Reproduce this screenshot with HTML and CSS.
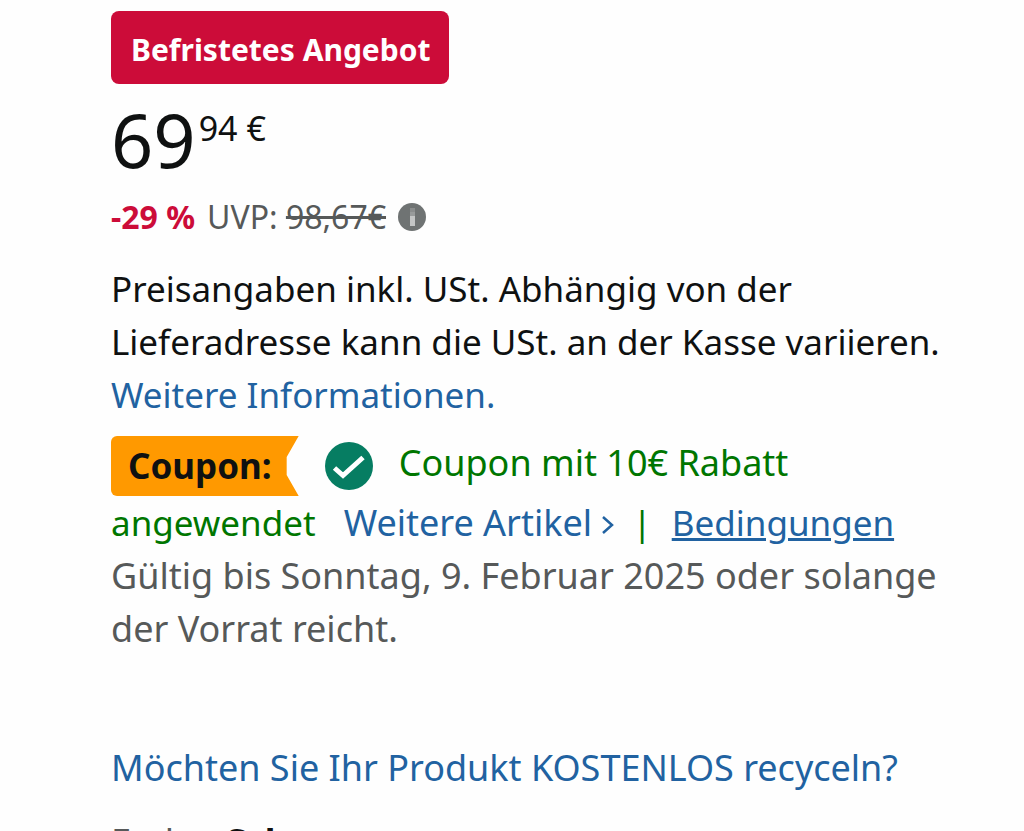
FILE: index.html
```
<!DOCTYPE html>
<html lang="de">
<head>
    <meta charset="UTF-8">
    <meta name="viewport" content="width=device-width, initial-scale=1.0">
    <title>Produktpreis</title>
    <link rel="stylesheet" href="styles.css">
</head>
<body>

    <main class="offer">
        <span class="deal-badge">Befristetes Angebot</span>

        <div class="price">
            <span class="price-whole">69</span>
            <span class="price-fraction">94&nbsp;€</span>
        </div>

        <div class="savings">
            <span class="percent">-29 %</span>
            <span>UVP: <s>98,67€</s></span>
            <button class="info" type="button" aria-label="Informationen zur UVP">
                <svg viewBox="0 0 28 28" width="28" height="28">
                    <circle cx="14" cy="14" r="14" fill="#6f7373"/>
                    <rect x="12" y="5" width="5" height="4" fill="#8a8d8d"/>
                    <rect x="12" y="9" width="5" height="4" fill="#989b9b"/>
                    <rect x="12" y="13" width="5" height="10" fill="#c4c6c6"/>
                </svg>
            </button>
        </div>

        <p class="tax">Preisangaben inkl. USt. Abhängig von der Lieferadresse kann die USt. an der Kasse variieren. <a href="#">Weitere Informationen.</a></p>

        <div class="coupon">
            <div class="coupon-row">
                <span class="coupon-label">Coupon:</span>
                <svg class="check" viewBox="0 0 48 48" width="48" height="48">
                    <circle cx="24" cy="24" r="24" fill="#067d62"/>
                    <path d="M9.500 26L18 33.500L38 15.500" fill="none" stroke="#fff" stroke-width="5"/>
                </svg>
                <span class="coupon-text">Coupon mit 10€ Rabatt</span>
            </div>
            <div class="coupon-row">
                <span>angewendet</span>
                <a class="more" href="#">Weitere Artikel
                    <svg viewBox="0 0 14 20" width="14" height="20">
                        <path d="M2 1L11 9L2 17" fill="none" stroke="#2162a1" stroke-width="2.500"/>
                    </svg>
                </a>
                <span class="divider">|</span>
                <a class="terms" href="#">Bedingungen</a>
            </div>
            <p class="validity">Gültig bis Sonntag, 9. Februar 2025 oder solange der Vorrat reicht.</p>
        </div>

        <a class="recycle" href="#">Möchten Sie Ihr Produkt KOSTENLOS recyceln?</a>

        <div class="variant"><span>Farbe:</span> <b>Schwarz</b></div>
    </main>

</body>
</html>
```
FILE: styles.css
```
html {
    overflow: hidden;
}

body {
    margin: 0;
    padding: 11px 64px 0 111px;
    height: 100vh;
    box-sizing: border-box;
    overflow: hidden;
    background: #fefefe;
    color: #0f1111;
    font-family: "Noto Sans", "Open Sans", sans-serif;
    font-size: 36px;
    line-height: 53px;
}

a {
    color: #2162a1;
    text-decoration: none;
}

p {
    margin: 0;
}

.offer {
    display: flex;
    flex-direction: column;
    align-items: flex-start;
}

.deal-badge {
    padding: 12px 18px 8px 20px;
    border-radius: 8px;
    background: #cc0c39;
    color: #fff;
    font-size: 30px;
    font-weight: bold;
}

.price {
    display: flex;
    align-items: flex-start;
    padding-top: 16px;
}

.price-whole {
    font-size: 74px;
    line-height: 80px;
}

.price-fraction {
    padding-left: 3px;
    font-size: 34px;
    line-height: 56px;
}

.savings {
    display: flex;
    align-items: center;
    gap: 12px;
    padding-top: 10px;
    color: #565959;
    font-size: 32px;
}

.percent {
    color: #cc0c39;
    font-weight: bold;
}

.info {
    display: flex;
    padding: 0;
    border: none;
    background: none;
    cursor: pointer;
}

.tax {
    padding-top: 19px;
    font-size: 35px;
}

.coupon {
    padding-top: 15px;
    color: #007600;
}

.coupon-row {
    display: flex;
    align-items: flex-start;
    font-size: 35px;
}

.coupon-label {
    padding: 3px 27px 4px 17px;
    border-radius: 6px 0 0 6px;
    background: #ff9900;
    color: #0f1111;
    font-weight: bold;
    clip-path: polygon(0 0, 100% 0, calc(100% - 12px) 35%, calc(100% - 12px) 65%, 100% 100%, 0 100%);
}

.check {
    align-self: center;
    margin: 0 26px;
}

.coupon-text {
    font-size: 36px;
}

.more {
    margin-left: 28px;
    font-size: 36px;
}

.divider {
    margin: 0 20px 0 17px;
}

.terms {
    text-decoration: underline;
}

.validity {
    color: #565959;
}

.recycle {
    padding-top: 86px;
}

.variant {
    padding-top: 21px;
    color: #565959;
}

.variant b {
    color: #0f1111;
}
```
